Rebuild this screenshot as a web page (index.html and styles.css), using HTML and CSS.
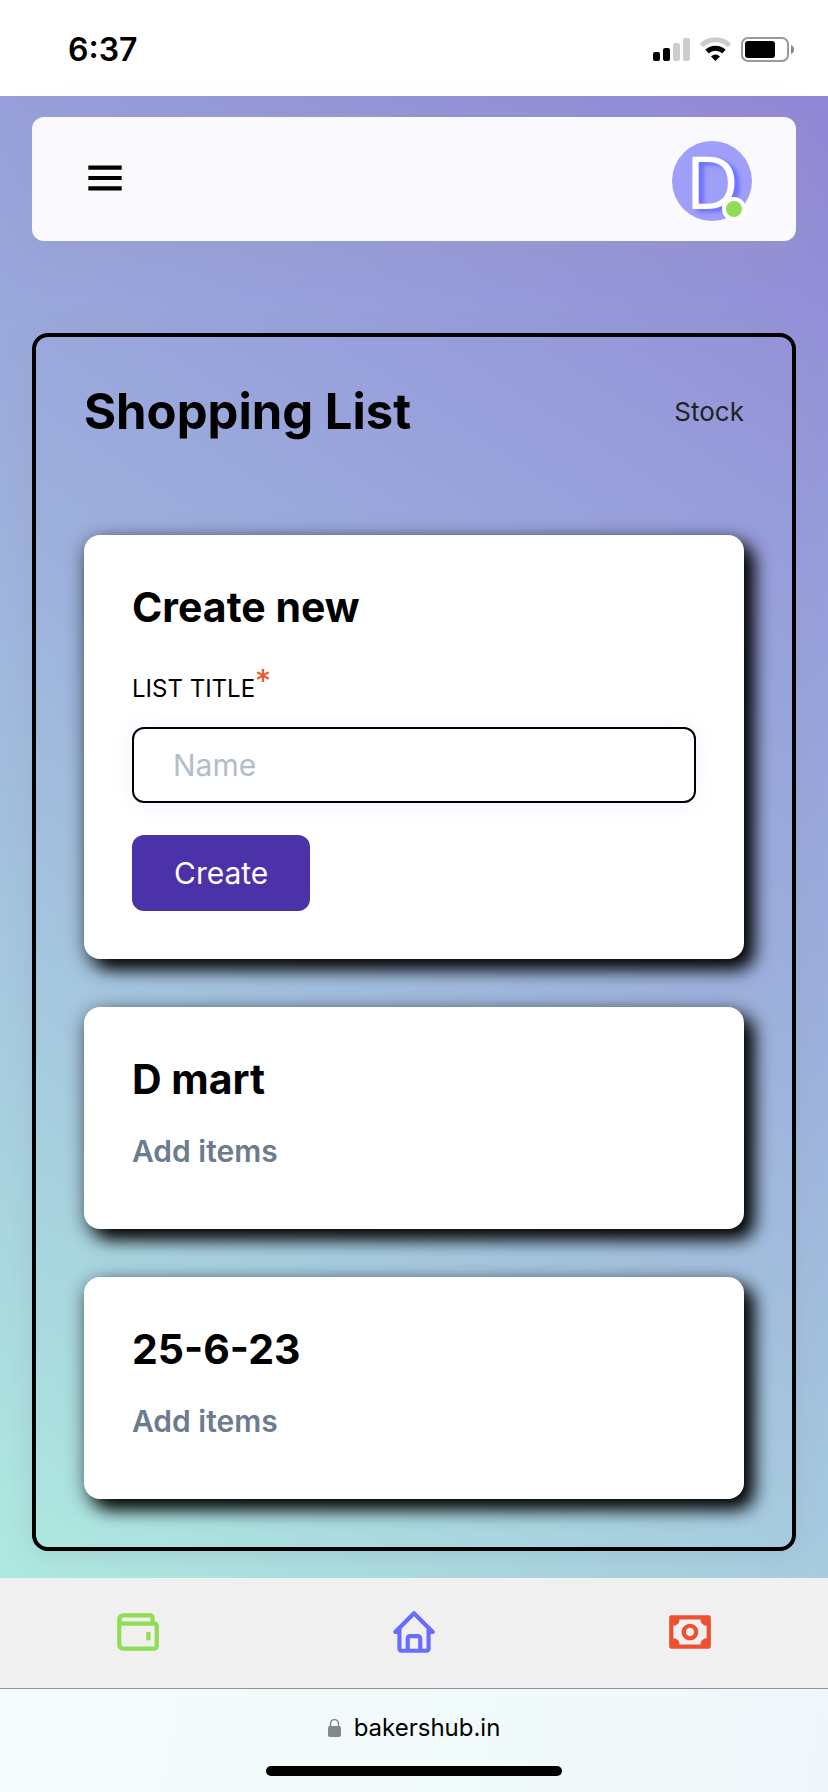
FILE: index.html
```html
<!DOCTYPE html>
<html lang="en">
<head>
<meta charset="utf-8">
<meta name="viewport" content="width=device-width, initial-scale=1">
<title>Shopping List</title>
<link rel="stylesheet" href="styles.css">
</head>
<body>
<div class="status">
  <span class="status-time">6:37</span>
  <svg class="status-icons" width="142" height="26" viewBox="0 0 142 26" aria-hidden="true">
    <rect x="0" y="15" width="7" height="9" rx="2"/>
    <rect x="10" y="11" width="7" height="13" rx="2"/>
    <rect x="20" y="6" width="7" height="18" rx="2" fill="#ccc"/>
    <rect x="30" y="1" width="7" height="23" rx="2" fill="#ccc"/>
    <path d="M48.500 8.500A20 20 0 0 1 76.500 8.500" fill="none" stroke="#ccc" stroke-width="5"/>
    <path d="M54 14.500A12.500 12.500 0 0 1 71 14.500" fill="none" stroke="#000" stroke-width="5"/>
    <path d="M58 19.500Q62.500 15.500 67 19.500L62.500 24Z"/>
    <rect x="89" y="1" width="46" height="23" rx="6" fill="none" stroke="#999" stroke-width="2"/>
    <rect x="92" y="4" width="30" height="17" rx="3"/>
    <path d="M138 8Q141 9 141 12.500T138 17Z" fill="#888"/>
  </svg>
</div>
<div class="page">
  <header class="topbar">
    <button class="icon-button" type="button" aria-label="Menu">
      <svg class="icon" viewBox="0 0 24 24"><path d="M4 6h16v2H4zm0 5h16v2H4zm0 5h16v2H4z"/></svg>
    </button>
    <button class="avatar" type="button" aria-label="Account">D<span class="avatar-dot"></span></button>
  </header>
  <main class="panel">
    <div class="panel-head">
      <h1 class="title">Shopping List</h1>
      <a class="stock" href="#stock">Stock</a>
    </div>
    <form class="card">
      <h2 class="card-title">Create new</h2>
      <label class="label" for="name">LIST TITLE<span class="required">*</span></label>
      <input class="input" id="name" type="text" placeholder="Name">
      <button class="create" type="button">Create</button>
    </form>
    <section class="card">
      <h2 class="card-title">D mart</h2>
      <a class="add" href="#d-mart">Add items</a>
    </section>
    <section class="card">
      <h2 class="card-title">25-6-23</h2>
      <a class="add" href="#25-6-23">Add items</a>
    </section>
  </main>
</div>
<nav class="tabs">
  <a class="tab tab-wallet" href="#wallet" aria-label="Wallet"><svg class="icon" viewBox="0 0 24 24"><path d="M16 12h2v4h-2z"/><path fill-rule="evenodd" d="M20 7V5c0-1.103-.897-2-2-2H5C3.346 3 2 4.346 2 6v12c0 2.201 1.794 3 3 3h15c1.103 0 2-.897 2-2V9c0-1.103-.897-2-2-2zM5 5h13v2H5a1.001 1.001 0 0 1 0-2zm15 14H5.012C4.550 18.988 4 18.805 4 18V8.815c.314.113.647.185 1 .185h15v10z"/></svg></a>
  <a class="tab tab-home" href="#home" aria-label="Home"><svg class="icon" viewBox="0 0 24 24"><path d="M3 13h1v7c0 1.103.897 2 2 2h12c1.103 0 2-.897 2-2v-7h1a1 1 0 0 0 .707-1.707l-9-9a.999.999 0 0 0-1.414 0l-9 9A1 1 0 0 0 3 13zm7 7v-5h4v5h-4zm2-15.586 6 6V15l.001 5H16v-5c0-1.103-.897-2-2-2h-4c-1.103 0-2 .897-2 2v5H6v-9.586l6-6z"/></svg></a>
  <a class="tab tab-money" href="#money" aria-label="Money"><svg class="icon" viewBox="0 0 24 24"><path d="M12 8c-2.206 0-4 1.794-4 4s1.794 4 4 4 4-1.794 4-4-1.794-4-4-4zm0 6c-1.103 0-2-.897-2-2s.897-2 2-2 2 .897 2 2-.897 2-2 2z"/><path d="M21 4H3a1 1 0 0 0-1 1v14a1 1 0 0 0 1 1h18a1 1 0 0 0 1-1V5a1 1 0 0 0-1-1zm-1 11a3 3 0 0 0-3 3H7a3 3 0 0 0-3-3V9a3 3 0 0 0 3-3h10a3 3 0 0 0 3 3v6z"/></svg></a>
</nav>
<footer class="browser">
  <div class="address">
    <svg width="14" height="20" viewBox="0 0 14 20" aria-hidden="true"><rect x="0" y="8" width="13" height="11" rx="2" fill="#85878b"/><path d="M2.500 9V6a4 4.500 0 0 1 8 0V9" fill="none" stroke="#85878b" stroke-width="1.500"/></svg>
    <span>bakershub.in</span>
  </div>
  <div class="home-bar"></div>
</footer>
</body>
</html>
```

FILE: styles.css
```css
* { box-sizing: border-box; }
body {
  margin: 0;
  min-height: 100vh;
  display: flex;
  flex-direction: column;
  font-family: Inter, "Liberation Sans", sans-serif;
  color: #000;
  background: #fff;
}
h1, h2 { margin: 0; }
a { text-decoration: none; }
button { border: 0; font: inherit; }
.status {
  height: 96px;
  padding: 4px 33px 0 68px;
  display: flex;
  align-items: center;
  justify-content: space-between;
}
.status-time { font-size: 32px; font-weight: 600; line-height: 40px; }
.page {
  flex: 1;
  padding: 21px 32px 27px;
  background: linear-gradient(33deg, #aeeadf 0%, #a6cbdf 27%, #9db1dc 52%, #979edb 75%, #9186d6 100%);
}
.topbar {
  height: 124px;
  padding: 4px 44px 0 48px;
  display: flex;
  align-items: center;
  justify-content: space-between;
  border-radius: 12px;
  background: rgba(255, 255, 255, .95);
  box-shadow: 0 8px 40px rgba(150, 160, 180, .3);
}
.icon-button { padding: 0 0 6px; background: none; display: flex; }
.icon { display: block; width: 50px; height: 50px; fill: currentColor; }
.avatar {
  position: relative;
  width: 80px;
  height: 80px;
  padding: 0;
  border-radius: 50%;
  background: #9f9ffa;
  color: #fff;
  font-family: "Open Sans", sans-serif;
  font-size: 74px;
  line-height: 80px;
  text-shadow: 5px 3px 4px #696cff;
}
.avatar-dot {
  position: absolute;
  right: 6px;
  bottom: 0;
  width: 24px;
  height: 24px;
  border: 4px solid #fff;
  border-radius: 50%;
  background: #8edd52;
}
.panel {
  margin-top: 92px;
  padding: 48px;
  border: 4px solid #000;
  border-radius: 16px;
  display: flex;
  flex-direction: column;
  gap: 48px;
  box-shadow: 0 4px 24px rgba(150, 160, 180, .3);
}
.panel-head {
  height: 102px;
  display: flex;
  align-items: flex-start;
  justify-content: space-between;
}
.title { font-size: 49px; line-height: 54px; font-weight: 700; }
.stock { font-size: 26px; line-height: 54px; color: #222; }
.card {
  padding: 48px;
  border-radius: 16px;
  background: #fff;
  box-shadow: 10px 10px 18px #000, 0 4px 20px rgba(0, 0, 0, .4);
  display: flex;
  flex-direction: column;
  align-items: flex-start;
}
.card-title { font-size: 41px; line-height: 48px; font-weight: 700; }
.label { margin-top: 34px; font-size: 24px; line-height: 48px; }
.required { color: #f0532d; font-size: 32px; line-height: 0; vertical-align: 4px; }
.input {
  width: 100%;
  height: 76px;
  margin-top: 14px;
  padding: 0 39px;
  border: 2px solid #000;
  border-radius: 12px;
  background: #fff;
  font: inherit;
  font-size: 30px;
  box-shadow: 0 0 20px rgba(105, 108, 255, .1);
}
.input::placeholder { color: #b4bdc6; opacity: 1; }
.create {
  height: 76px;
  margin-top: 32px;
  padding: 0 42px;
  border-radius: 12px;
  background: #4b32a8;
  color: #fff;
  font-size: 30px;
}
.add { margin: 24px 0 6px; font-size: 30px; line-height: 48px; font-weight: 600; color: #6d7b8f; }
.tabs {
  height: 110px;
  padding-bottom: 2px;
  display: grid;
  grid-template-columns: repeat(3, 1fr);
  align-items: center;
  justify-items: center;
  background: #f0f0f0;
}
.tab-wallet { color: #8edd52; }
.tab-home { color: #696cff; }
.tab-money { color: #ed5030; }
.browser {
  height: 104px;
  padding: 24px 0 16px;
  border-top: 1px solid #8e9497;
  display: flex;
  flex-direction: column;
  align-items: center;
  justify-content: space-between;
  background: linear-gradient(100deg, #f4fdfb, #f1fafa 60%, #f0f7fb);
}
.address { display: flex; align-items: center; gap: 12px; font-size: 24px; line-height: 30px; }
.home-bar { width: 296px; height: 10px; border-radius: 5px; background: #000; }
```
